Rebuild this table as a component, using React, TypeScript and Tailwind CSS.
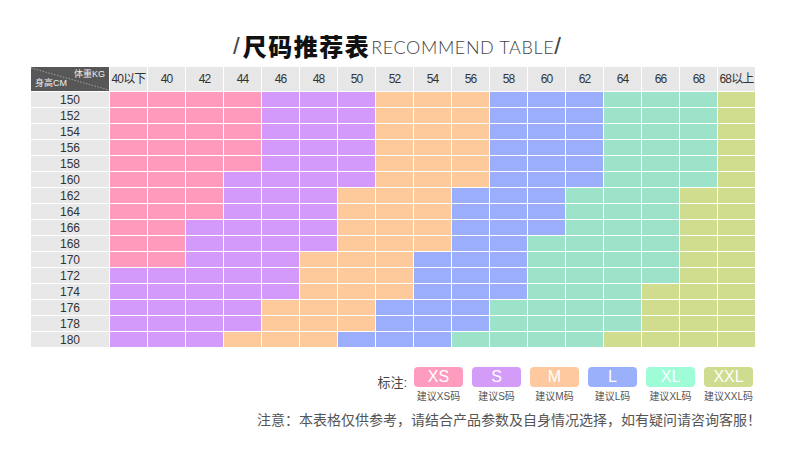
const colors: Record<string, string> = {
  P: "bg-[#fe9bbd]",
  V: "bg-[#d49afb]",
  O: "bg-[#fec99b]",
  B: "bg-[#9baefc]",
  G: "bg-[#9de3c9]",
  Y: "bg-[#d0dc8e]",
};

const weights = ["40以下", "40", "42", "44", "46", "48", "50", "52", "54", "56", "58", "60", "62", "64", "66", "68", "68以上"];

const rows: [string, string][] = [
  ["150", "PPPPVVVOOOBBBGGGY"],
  ["152", "PPPPVVVOOOBBBGGGY"],
  ["154", "PPPPVVVOOOBBBGGGY"],
  ["156", "PPPPVVVOOOBBBGGGY"],
  ["158", "PPPPVVVOOOBBBGGGY"],
  ["160", "PPPVVVVOOOBBBGGGY"],
  ["162", "PPPVVVOOOBBBGGGYY"],
  ["164", "PPPVVVOOOBBBGGGYY"],
  ["166", "PPVVVVOOOBBBGGGYY"],
  ["168", "PPVVVVOOOBBGGGGYY"],
  ["170", "PPVVVOOOBBBGGGGYY"],
  ["172", "VVVVVOOOBBBGGGGYY"],
  ["174", "VVVVVOOOBBBGGGYYY"],
  ["176", "VVVVOOOBBBGGGGYYY"],
  ["178", "VVVVOOOBBBGGGGYYY"],
  ["180", "VVVOOOBBBGGGGYYYY"],
];

const legend = [
  { size: "XS", bg: "bg-[#fe9cc0]" },
  { size: "S", bg: "bg-[#d39cf8]" },
  { size: "M", bg: "bg-[#fec99e]" },
  { size: "L", bg: "bg-[#9bb0fb]" },
  { size: "XL", bg: "bg-[#9efcd6]" },
  { size: "XXL", bg: "bg-[#cddc8e]" },
];

function CornerCell() {
  return (
    <div className="relative bg-[#575757] text-[#eeeeee] text-[9px] leading-none overflow-hidden whitespace-nowrap">
      <svg className="absolute inset-0" width="78" height="24" viewBox="0 0 78 24">
        <line x1="0" y1="1" x2="78" y2="23" stroke="#a0a0a0" strokeWidth="1" strokeDasharray="1.5 1.5" />
      </svg>
      <span className="absolute right-[4px] top-[3px]">体重KG</span>
      <span className="absolute left-[4px] bottom-[3px]">身高CM</span>
    </div>
  );
}

export default function App() {
  return (
    <div
      className="w-[790px] h-[456px] bg-white text-[#333] overflow-hidden"
      style={{ fontFamily: '"Liberation Sans", "Noto Sans CJK SC", sans-serif' }}
    >
      <div className="flex items-end justify-center pt-[31px] h-[67px] pb-[9px] pl-[4px]">
        <span className="text-[24px] font-light text-[#444] leading-none mr-[3px]">/</span>
        <span
          className="text-[24px] font-black leading-none text-[#111] tracking-[1.5px]"
          style={{ fontFamily: '"Noto Sans CJK SC", sans-serif' }}
        >
          尺码推荐表
        </span>
        <span
          className="text-[18px] font-light text-[#444] leading-none ml-[1px] mb-[2px] tracking-[0.6px]"
          style={{ fontFamily: 'Lato, "Liberation Sans", sans-serif' }}
        >
          RECOMMEND TABLE
        </span>
        <span className="text-[24px] font-light text-[#444] leading-none">/</span>
      </div>

      <div className="pl-[31px]">
        <div className="grid grid-cols-[78px_repeat(17,37px)] grid-rows-[24px_repeat(16,15px)] gap-px w-[724px]">
          <CornerCell />
          {weights.map((w) => (
            <div
              key={w}
              className="bg-[#e7e7e7] flex items-center justify-center text-[12px] text-[#333] whitespace-nowrap tracking-[-0.8px] overflow-hidden"
            >
              {w}
            </div>
          ))}
          {rows.map(([h, pattern]) => (
            <>
              <div key={h} className="bg-[#e8e8e8] flex items-center justify-center text-[12px] text-[#333] leading-none">
                {h}
              </div>
              {pattern.split("").map((c, i) => (
                <div key={h + "-" + i} className={colors[c]} />
              ))}
            </>
          ))}
        </div>
      </div>

      <div className="flex justify-end items-start pr-[37px] mt-[20px]">
        <span className="text-[13px] text-[#444] mt-[6px] mr-[7px]">标注:</span>
        <div className="flex gap-[9px]">
          {legend.map((l) => (
            <div key={l.size} className="flex flex-col items-center w-[49px]">
              <div className={`${l.bg} w-[49px] h-[20px] rounded-[4px] flex items-center justify-center text-white text-[16px] leading-none`}>
                {l.size}
              </div>
              <span className="text-[10px] text-[#555] mt-[5px] leading-none whitespace-nowrap">建议{l.size}码</span>
            </div>
          ))}
        </div>
      </div>

      <div className="flex justify-end pr-[29px] mt-[11px]">
        <span className="text-[14px] text-[#555] leading-none">
          注意：本表格仅供参考，请结合产品参数及自身情况选择，如有疑问请咨询客服！
        </span>
      </div>
    </div>
  );
}
